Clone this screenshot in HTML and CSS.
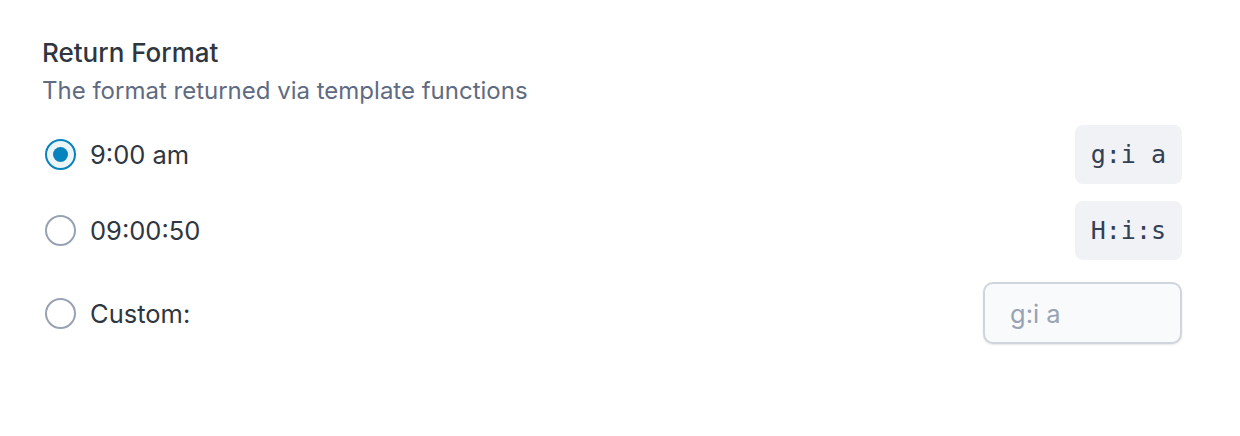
FILE: index.html
```html
<!DOCTYPE html>
<html>
<head>
<meta charset="utf-8">
<link rel="stylesheet" href="styles.css">
</head>
<body>
<div class="field">
  <div class="label">Return Format</div>
  <div class="desc">The format returned via template functions</div>
  <ul class="choices">
    <li class="choice">
      <span class="radio checked"></span>
      <span class="choice-label">9:00 am</span>
      <code class="fmt">g:i a</code>
    </li>
    <li class="choice">
      <span class="radio"></span>
      <span class="choice-label">09:00:50</span>
      <code class="fmt">H:i:s</code>
    </li>
    <li class="choice custom">
      <span class="radio"></span>
      <span class="choice-label">Custom:</span>
      <input class="custom-input" type="text" placeholder="g:i a">
    </li>
  </ul>
</div>
</body>
</html>
```

FILE: styles.css
```css
html, body {
  margin: 0;
  padding: 0;
  background: #ffffff;
}
body {
  font-family: Inter, "Noto Sans", sans-serif;
  width: 1240px;
  height: 436px;
}
.field {
  padding: 37px 58px 0 42px;
}
.label {
  font-size: 26px;
  font-weight: 500;
  color: #30363f;
  line-height: 32px;
}
.desc {
  margin-top: 7px;
  font-size: 24px;
  color: #5f6b82;
  line-height: 30px;
}
.choices {
  list-style: none;
  margin: 19px 0 0 0;
  padding: 0;
  display: flex;
  flex-direction: column;
  gap: 17px;
}
.choice {
  display: flex;
  align-items: center;
  height: 59px;
  padding-left: 3px;
}
.choice.custom {
  height: 62px;
  margin-top: 5px;
}
.radio {
  box-sizing: border-box;
  width: 31px;
  height: 31px;
  border-radius: 50%;
  border: 2px solid #98a2b3;
  background: #fff;
  display: flex;
  align-items: center;
  justify-content: center;
  flex: none;
}
.radio.checked {
  border-color: #0783be;
  background: #ebf5fa;
}
.radio.checked::after {
  content: "";
  width: 15px;
  height: 15px;
  border-radius: 50%;
  background: #0783be;
}
.choice-label {
  margin-left: 14px;
  font-size: 25.5px;
  color: #30363f;
  flex: 1;
}
.fmt {
  box-sizing: border-box;
  height: 59px;
  padding: 0 16px;
  display: flex;
  align-items: center;
  background: #f0f2f5;
  border-radius: 8px;
  font-family: "DejaVu Sans Mono", monospace;
  font-size: 25px;
  color: #344054;
}
.custom-input {
  box-sizing: border-box;
  width: 199px;
  height: 62px;
  border: 2px solid #d0d5dd;
  border-radius: 10px;
  background: #f9fafb;
  box-shadow: 0 1px 2px rgba(16, 24, 40, 0.1);
  padding: 0 25px;
  font-family: Inter, "Noto Sans", sans-serif;
  font-size: 25.5px;
  color: #344054;
  outline: none;
}
.custom-input::placeholder {
  color: #98a2b3;
}
```
